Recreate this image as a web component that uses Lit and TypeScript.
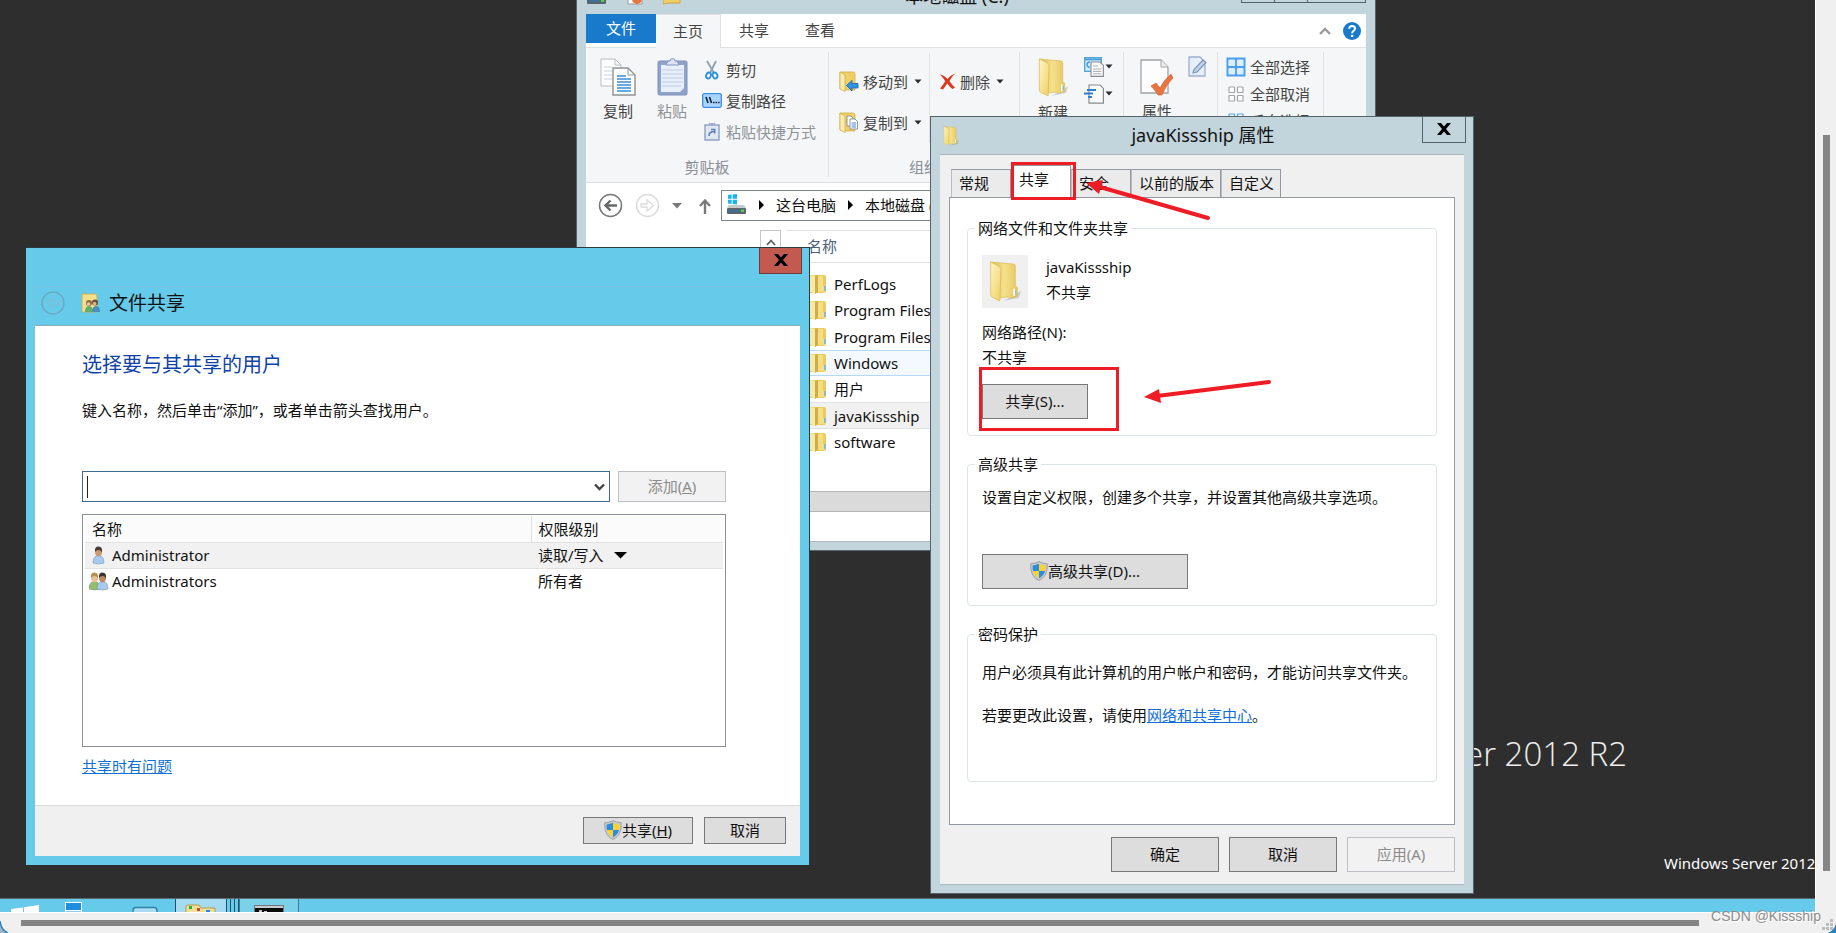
import { LitElement, html, svg, css } from "lit";
import { customElement, property } from "lit/decorators.js";
import { classMap } from "lit/directives/class-map.js";

/* ---------- shared styles ---------- */

const base = css`
  :host {
    display: block;
    font: 15px/20px "Noto Sans", "Noto Sans CJK SC", sans-serif;
    color: #111;
  }
  * {
    box-sizing: border-box;
  }
  button,
  input,
  select {
    font: inherit;
    color: inherit;
    margin: 0;
    padding: 0;
    border: 0;
    border-radius: 0;
    background: none;
    outline: none;
  }
  svg {
    display: block;
    flex: none;
  }
  a {
    color: #0f6fd6;
  }
  .push {
    display: flex;
    align-items: center;
    justify-content: center;
    padding-bottom: 2px;
    border: 1px solid #787878;
    background: #dddddd;
    white-space: nowrap;
  }
  .push:disabled {
    color: #8b8b8b;
    border-color: #bcc0c4;
    background: #f2f2f2;
  }
`;

/* ---------- icons ---------- */

const folder = (w: number, h: number) => html`
  <svg width=${w} height=${h} viewBox="0 0 32 40">
    <defs>
      <linearGradient id="back" x1="0" x2="1">
        <stop offset="0" stop-color="#d9b94e" />
        <stop offset=".5" stop-color="#f5e08c" />
        <stop offset="1" stop-color="#e6c860" />
      </linearGradient>
      <linearGradient id="front" x1="0" x2="1" y2="1">
        <stop offset="0" stop-color="#fff6c4" />
        <stop offset="1" stop-color="#efd066" />
      </linearGradient>
    </defs>
    <path d="M20 36 L32 29 L29 36 L14 39z" fill="#000" opacity=".16" />
    <path d="M2 1 L24 3 Q26 3 26 5 V24 L28 26 V34 L22 36 L19 35 L11 36z" fill="url(#back)" stroke="#d9ba56" stroke-width=".7" />
    <path d="M2 1 L10 5 Q12 6 12 8 L11 39 L3 35 Q2 34 2 32z" fill="url(#front)" stroke="#d9ba56" stroke-width=".7" />
    <path d="M25 27 V34" stroke="#fff" stroke-width="1.6" />
    <path d="M26.5 28 V33" stroke="#7fb9d8" />
  </svg>
`;

const listFolder = html`
  <svg width="21" height="20" viewBox="0 0 21 20">
    <path d="M3 1 H18 Q20 1 20 3 V17 Q20 19 18 19 H3z" fill="#e9cb62" />
    <path d="M12 2 H17 V12 L20 13 V18 L12 18z" fill="#f3de84" />
    <path d="M3 1 L9 2 V20 L3 17z" fill="#f7eaa8" />
    <path d="M9 2 L12 1 V18 L9 20z" fill="#cfae4a" />
    <path d="M19 12 V17" stroke="#69aee0" stroke-width="1.5" />
  </svg>
`;

const shield = html`
  <svg width="18" height="20" viewBox="0 0 18 20">
    <path d="M9 .6 C11.5 2 14.5 2.6 17.2 2.7 C17.6 10.5 15.6 16.4 9 19.4 C2.4 16.4 .4 10.5 .8 2.7 C3.5 2.6 6.5 2 9 .6z" fill="#c9cdd0" stroke="#8b9299" stroke-width=".8" />
    <path d="M9 2.8 V10 H3 C2.6 8 2.6 6 2.7 4.4 C5 4.2 7 3.7 9 2.8z" fill="#2c8ae0" />
    <path d="M9 2.8 C11 3.7 13 4.2 15.3 4.4 C15.4 6 15.4 8 15 10 H9z" fill="#f8d22e" />
    <path d="M3 10 H9 V17.3 C6 15.7 3.8 13.5 3 10z" fill="#f8d22e" />
    <path d="M15 10 H9 V17.3 C12 15.7 14.2 13.5 15 10z" fill="#2c8ae0" />
  </svg>
`;

const person = (x: number, hair: string, skin: string, coat: string) => svg`
  <g transform="translate(${x} 0)">
    <path d="M0 17 Q0 9.5 5.5 9.5 Q11 9.5 11 17 Q5.5 19 0 17z" fill=${coat} stroke="#6f8ba6" stroke-width=".5"/>
    <ellipse cx="5.5" cy="6" rx="3.4" ry="4.4" fill=${skin}/>
    <path d="M2 6 Q1.4 .6 5.6 .6 Q9.8 .6 9 7 Q8.4 4.2 5.6 4 Q3.2 4 2 6z" fill=${hair}/>
  </g>`;

const userIcon = html`
  <svg width="20" height="19" viewBox="0 0 20 19">${person(4, "#4a3a30", "#c99873", "#a7cbee")}</svg>
`;
const usersIcon = html`
  <svg width="20" height="19" viewBox="0 0 20 19">
    ${person(0, "#b98d4a", "#e3c393", "#8fbf68")}${person(8, "#3f3530", "#b98a68", "#a7cbee")}
  </svg>
`;

const caret = html`
  <svg width="8" height="5" viewBox="0 0 8 5"><path d="M.5 .5 H7.5 L4 4.5z" fill="#2b2b2b" /></svg>
`;

const crossIcon = html`
  <svg width="14" height="12" viewBox="0 0 14 12">
    <path d="M0 0 H4 L7 3.6 L10 0 H14 L9 6 L14 12 H10 L7 8.4 L4 12 H0 L5 6z" fill="#000" />
  </svg>
`;

const drive = html`
  <svg width="21" height="21" viewBox="0 0 21 21">
    <path d="M2 1 L5.6 .6 V4.8 H2z M6.6 .4 L11 0 V4.8 H6.6z M2 5.8 H5.6 V10 L2 9.6z M6.6 5.8 H11 V10.6 L6.6 10.1z" fill="#19b5f1" />
    <path d="M3 11 H18 L20 14 H1z" fill="#c3cbd0" />
    <rect x="1" y="14" width="19" height="6" rx="1" fill="#59646c" />
    <rect x="3" y="16" width="11" height="2" fill="#3f6f96" />
    <rect x="15" y="15.5" width="3" height="2.5" fill="#4fd34c" />
  </svg>
`;

const copyBig = html`
  <svg width="36" height="38" viewBox="0 0 36 38">
    <path d="M1 1 H15 L21 7 V28 H1z" fill="#fdfdfd" stroke="#b9bcc0" />
    <path d="M15 1 V7 H21" fill="none" stroke="#b9bcc0" />
    <path d="M4 9 H12 M4 13 H12 M4 17 H12 M4 21 H12" stroke="#c5d3e4" />
    <path d="M13 10 H28 L35 17 V37 H13z" fill="#fff" stroke="#8d9196" stroke-width="1.4" />
    <path d="M28 10 V17 H35" fill="none" stroke="#8d9196" />
    <path d="M17 18 H26 M17 21 H31 M17 24 H31 M17 27 H31 M17 30 H31 M17 33 H31" stroke="#3b8bd8" stroke-width="1.3" />
  </svg>
`;
const pasteBig = html`
  <svg width="31" height="38" viewBox="0 0 31 38">
    <rect x="1" y="3" width="29" height="34" rx="1.5" fill="#8fa2c8" stroke="#7d91ba" />
    <path d="M4 7 H27 V30 L23 34 H4z" fill="#e8eefa" />
    <path d="M5 12 H26 M5 16 H26 M5 20 H26 M5 24 H26 M5 28 H24" stroke="#c1cde4" />
    <path d="M9 7 L11 3 H13 A2.5 2.5 0 0 1 18 3 H20 L22 7z" fill="#dbe3f2" stroke="#8496bb" />
  </svg>
`;
const scissors = html`
  <svg width="20" height="20" viewBox="0 0 20 20">
    <path d="M5 1 L12 13 M14 1 L8 13" stroke="#8aa0b4" stroke-width="1.8" />
    <ellipse cx="6.5" cy="15.5" rx="2.3" ry="3" fill="none" stroke="#2b90d9" stroke-width="1.9" transform="rotate(20 6.5 15.5)" />
    <ellipse cx="13" cy="15.5" rx="2.3" ry="3" fill="none" stroke="#2b90d9" stroke-width="1.9" transform="rotate(-20 13 15.5)" />
  </svg>
`;
const pathIcon = html`
  <svg width="20" height="15" viewBox="0 0 20 15">
    <rect x=".7" y=".7" width="18.6" height="13.6" rx="1.5" fill="#a9d4ff" stroke="#3a8fe0" stroke-width="1.3" />
    <path d="M4 4 L6 10 M7.5 4 L9.5 10" stroke="#123" stroke-width="1.6" />
    <path d="M11 9.5 H12.6 M13.6 9.5 H15.2 M16.2 9.5 H17.6" stroke="#123" stroke-width="1.5" />
  </svg>
`;
const shortcutIcon = html`
  <svg width="20" height="18" viewBox="0 0 20 18">
    <rect x="3" y="2" width="14" height="15" fill="#dfe7f4" stroke="#8d9fc0" stroke-width="1.4" />
    <rect x="7" y="0" width="6" height="3" fill="#9fb0cf" />
    <path d="M7 13 Q7 8.5 12 8.5 M9 6.5 H12.7 V10.5" fill="none" stroke="#5b7cb0" stroke-width="1.5" />
  </svg>
`;
const moveIcon = html`
  <svg width="20" height="21" viewBox="0 0 20 21">
    <path d="M1 1 H14 Q16 1 16 3 V19 H5 L1 18z" fill="#efcf68" stroke="#d0aa3f" stroke-width=".7" />
    <path d="M1 1 L6 4 V20.5 L1 18z" fill="#fbedb0" stroke="#d0aa3f" stroke-width=".7" />
    <path d="M7.5 14.5 L13 9.5 V12.5 H19 V17 H13 V20z" fill="#3094e4" stroke="#1766ac" stroke-width=".8" />
  </svg>
`;
const copyToIcon = html`
  <svg width="20" height="21" viewBox="0 0 20 21">
    <path d="M1 1 H14 Q16 1 16 3 V19 H5 L1 18z" fill="#efcf68" stroke="#d0aa3f" stroke-width=".7" />
    <path d="M1 1 L6 4 V20.5 L1 18z" fill="#fbedb0" stroke="#d0aa3f" stroke-width=".7" />
    <path d="M8 4 H12 L14 6 V14 H8z" fill="#fff" stroke="#868c92" stroke-width=".9" />
    <path d="M11 7 H16 L18.5 9.5 V17 H11z" fill="#fff" stroke="#868c92" stroke-width=".9" />
    <path d="M12.6 11 H17 M12.6 13 H17 M12.6 15 H17" stroke="#3b8bd8" />
  </svg>
`;
const deleteIcon = html`
  <svg width="17" height="17" viewBox="0 0 17 17">
    <path d="M1 1.5 Q5 2 8.5 6 Q12 2 16 .5 Q12.5 4 10.5 8 Q13 12 16 14.5 L13.5 16 Q10.5 14 8.3 10.6 Q6 14 4 16.5 L1 15.5 Q4 12 6.2 8.2 Q4 4.5 1 1.5z" fill="#d8391f" />
  </svg>
`;
const renameIcon = html`
  <svg width="17" height="12" viewBox="0 0 17 12"><rect x=".5" y=".5" width="16" height="11" fill="#cfe4fa" stroke="#3a8fe0" /></svg>
`;
const newItem = html`
  <svg width="20" height="20" viewBox="0 0 20 20">
    <rect x=".7" y=".7" width="16.6" height="13.6" fill="#d7ecfb" stroke="#4ba0d8" stroke-width="1.3" />
    <path d="M1 2.4 H17" stroke="#4ba0d8" stroke-width="2" />
    <path d="M6 5 Q3 5 3 7.5 T6 10.5" fill="none" stroke="#4ba0d8" stroke-width="1.5" />
    <path d="M7 5 H16 L19.4 8.4 V19.4 H7z" fill="#fbfbfb" stroke="#878c91" stroke-width="1.1" />
    <path d="M9 9 H14 M9 12 H17.4 M9 14.4 H17.4 M9 16.8 H17.4" stroke="#a9adb2" />
  </svg>
`;
const easyAccess = html`
  <svg width="20" height="20" viewBox="0 0 20 20">
    <path d="M5 1 H16 L19.4 4.4 V19.2 H5z" fill="#fbfbfb" stroke="#878c91" stroke-width="1.2" />
    <path d="M3 6 H12 M0 9.6 H9 M4 13 H8" stroke="#2f7fd0" stroke-width="2" />
  </svg>
`;
const propsBig = html`
  <svg width="34" height="38" viewBox="0 0 34 38">
    <path d="M1 2 H21 L28 9 V35 H1z" fill="#fdfdfd" stroke="#a0a4a8" stroke-width="1.3" />
    <path d="M21 2 V9 H28" fill="#eee" stroke="#a0a4a8" />
    <path d="M11 28 L16 25 L20 30 Q24 22 31 16 L33 20 Q26 27 22 37 L18 37 Q15 32 11 28z" fill="#ea7440" stroke="#cf5a28" stroke-width=".6" />
  </svg>
`;
const editIcon = html`
  <svg width="19" height="21" viewBox="0 0 19 21">
    <path d="M1 1 H12 L17 6 V20 H1z" fill="#e6eef9" stroke="#9fb0cb" stroke-width="1.3" />
    <path d="M5 17 L6 13.5 L15 4 L18 6.5 L9 16z" fill="#c1d1ea" stroke="#7b92b8" stroke-width="1.1" />
  </svg>
`;
const tiles = (fill: string, stroke: string, sheet: string) => html`
  <svg width="20" height="20" viewBox="0 0 20 20">
    <rect x=".5" y=".5" width="19" height="19" fill=${sheet} />
    ${[3, 11.5].map((x) =>
      [3, 11.5].map(
        (y) => svg`<rect x=${x} y=${y} width="5.5" height="5.5" rx=".6" fill=${fill} stroke=${stroke} stroke-width="1.2"/>`
      )
    )}
  </svg>
`;

/* ---------- explorer window ---------- */

@customElement("explorer-window")
export class ExplorerWindow extends LitElement {
  static styles = [
    base,
    css`
      :host {
        background: #c3d5dc;
        border: 1px solid #56636a;
        padding: 0 9px 8px;
      }
      .titlebar {
        display: flex;
        height: 37px;
        justify-content: space-between;
      }
      .quick {
        display: flex;
        align-items: flex-end;
        gap: 20px;
        height: 28px;
      }
      .title {
        padding: 9px 8px 0 0;
        font-size: 18px;
      }
      .sysbuttons {
        display: flex;
        height: 26px;
        border: 1px solid #56636a;
      }
      .sysbuttons button {
        width: 33px;
        border-right: 1px solid #56636a;
      }
      .sysbuttons button:last-child {
        width: 57px;
        border-right: 0;
      }
      .tabs {
        display: flex;
        height: 34px;
        background: #fff;
        border-bottom: 1px solid #dfe0e1;
      }
      .tab {
        display: block;
        width: 66px;
        padding-bottom: 2px;
        color: #444;
      }
      .tab.file {
        width: 70px;
        height: 29px;
        background: #1979ca;
        color: #fff;
      }
      .tab.home {
        width: 65px;
        height: 34px;
        background: #f5f6f7;
        border: solid #dfe0e1;
        border-width: 1px 1px 0 0;
      }
      .tools {
        display: flex;
        align-items: center;
        gap: 12px;
        margin-left: auto;
        padding-right: 5px;
      }
      .ribbon {
        display: flex;
        height: 135px;
        background: #f5f6f7;
        border-bottom: 1px solid #dcdddf;
        color: #444;
      }
      .group {
        display: flex;
        flex-direction: column;
        flex: none;
        margin: 4px 0 5px;
        padding-top: 1px;
        border-right: 1px solid #e1e2e4;
      }
      .group .row {
        display: flex;
        padding-left: 5px;
      }
      .caption {
        margin-top: auto;
        text-align: center;
        color: #8a9097;
      }
      .clip {
        width: 243px;
      }
      .organize {
        width: 191px;
      }
      .create {
        width: 104px;
      }
      .open {
        width: 94px;
      }
      .select {
        width: 106px;
      }
      .big {
        display: flex;
        flex-direction: column;
        align-items: center;
        justify-content: flex-start;
        flex: none;
        gap: 5px;
        width: 54px;
        padding-top: 5px;
      }
      .wide {
        width: 56px;
      }
      .col {
        display: flex;
        flex-direction: column;
        flex: none;
        padding: 1px 0 0 3px;
      }
      .small {
        display: flex;
        align-items: center;
        gap: 4px;
        height: 31px;
        white-space: nowrap;
      }
      .spaced {
        padding: 8px 0 0 5px;
        width: 95px;
      }
      .spaced .small {
        height: 41px;
      }
      .spaced svg:last-child {
        margin-left: 2px;
      }
      .divided {
        width: 90px;
        border-left: 1px solid #e1e2e4;
        padding-left: 9px;
      }
      .tight {
        padding-top: 0;
      }
      .tight .small {
        height: 27px;
      }
      .create .small {
        gap: 1px;
      }
      .dim {
        color: #8e9298;
      }
      .address {
        display: flex;
        align-items: center;
        gap: 12px;
        height: 47px;
        padding: 0 0 2px 12px;
        background: #fff;
      }
      .recent {
        width: 14px;
      }
      .crumbs {
        display: flex;
        align-items: center;
        flex: 1;
        height: 31px;
        gap: 12px;
        margin: 0 10px 0 -3px;
        padding: 0 0 2px 4px;
        border: 1px solid #7f868b;
        white-space: nowrap;
      }
      .panes {
        display: flex;
        background: #fff;
      }
      .nav {
        display: flex;
        justify-content: flex-end;
        width: 195px;
      }
      .up {
        display: flex;
        justify-content: center;
        width: 21px;
        height: 30px;
        padding-top: 8px;
        border: 1px solid #c6c6c6;
      }
      .files {
        flex: 1;
        padding-left: 5px;
      }
      .colhead {
        height: 33px;
        padding: 5px 21px;
        border: solid #e2e2e2;
        border-width: 1px 0;
        color: #4c607a;
      }
      .items {
        display: grid;
        grid-auto-rows: 1fr;
        height: 184px;
        margin: 8px 0 36px;
        padding: 0;
        list-style: none;
      }
      .item {
        display: flex;
        align-items: center;
        gap: 7px;
        padding-left: 19px;
        border: 1px solid transparent;
      }
      .item.hover {
        background: #f4f9ff;
        border-color: #b5d7f8;
      }
      .item.picked {
        background: #f1f1f1;
        border-color: #e2e2e2;
      }
      .hscroll {
        height: 21px;
        background: #dadada;
        border: solid #b4b4b4;
        border-width: 1px 0;
      }
      .status {
        height: 30px;
        background: #fff;
        border-bottom: 1px solid #a9b9c0;
      }
    `,
  ];

  private files = ["PerfLogs", "Program Files", "Program Files (x86)", "Windows", "用户", "javaKissship", "software"];

  private small(icon: unknown, text: string, arrow = false, dim = false) {
    return html`<button class=${classMap({ small: true, dim })}>${icon}${text ? html`<span>${text}</span>` : ""}${arrow ? caret : ""}</button>`;
  }

  render() {
    return html`
      <div class="titlebar">
        <div class="quick">
          ${drive}
          <svg width="16" height="18" viewBox="0 0 16 18">
            <path d="M1 0 H15 V17 H1z" fill="#fff" stroke="#999" />
            <circle cx="10" cy="12" r="5" fill="#ea7440" />
          </svg>
          <svg width="18" height="18" viewBox="0 0 18 18"><path d="M0 0 H17 V16 H6 L0 17z" fill="#efcf68" stroke="#c9a23a" /></svg>
        </div>
        <div class="title">本地磁盘 (C:)</div>
        <div class="sysbuttons">
          <button aria-label="最小化"></button><button aria-label="最大化"></button><button aria-label="关闭"></button>
        </div>
      </div>
      <div class="tabs">
        <button class="tab file">文件</button>
        <button class="tab home">主页</button>
        <button class="tab">共享</button>
        <button class="tab">查看</button>
        <div class="tools">
          <svg width="12" height="8" viewBox="0 0 12 8"><path d="M1 7 L6 2 L11 7" fill="none" stroke="#9a9a9a" stroke-width="2.4" /></svg>
          <svg width="18" height="18" viewBox="0 0 18 18">
            <circle cx="9" cy="9" r="9" fill="#1979ca" />
            <path d="M6.2 6.8 Q6.3 4 9.1 4 Q12 4 12 6.5 Q12 8 10.4 9 Q9.2 9.8 9.2 11.2" fill="none" stroke="#fff" stroke-width="2" />
            <rect x="8.1" y="12.8" width="2.2" height="2.2" fill="#fff" />
          </svg>
        </div>
      </div>
      <div class="ribbon">
        <div class="group clip">
          <div class="row">
            <button class="big">${copyBig}复制</button>
            <button class="big dim">${pasteBig}粘贴</button>
            <div class="col">
              ${this.small(scissors, "剪切")} ${this.small(pathIcon, "复制路径")}
              ${this.small(shortcutIcon, "粘贴快捷方式", false, true)}
            </div>
          </div>
          <div class="caption">剪贴板</div>
        </div>
        <div class="group organize">
          <div class="row">
            <div class="col spaced">${this.small(moveIcon, "移动到", true)} ${this.small(copyToIcon, "复制到", true)}</div>
            <div class="col spaced divided">${this.small(deleteIcon, "删除", true)} ${this.small(renameIcon, "重命名")}</div>
          </div>
          <div class="caption">组织</div>
        </div>
        <div class="group create">
          <div class="row">
            <button class="big wide">${folder(34, 39)}新建</button>
            <div class="col tight">${this.small(newItem, "", true)} ${this.small(easyAccess, "", true)}</div>
          </div>
        </div>
        <div class="group open">
          <div class="row">
            <button class="big wide">${propsBig}属性</button>
            <div class="col tight">${this.small(editIcon, "")}</div>
          </div>
        </div>
        <div class="group select">
          <div class="row">
            <div class="col tight">
              ${this.small(tiles("#dceeff", "#dceeff", "#4a9ff0"), "全部选择")}
              ${this.small(tiles("#fff", "#a5a5a5", "none"), "全部取消")}
              ${this.small(tiles("#fff", "#4a9ff0", "none"), "反向选择")}
            </div>
          </div>
        </div>
      </div>
      <div class="address">
        <button aria-label="后退">
          <svg width="25" height="25" viewBox="0 0 25 25">
            <circle cx="12.5" cy="12.5" r="11" fill="none" stroke="#77797b" stroke-width="1.5" />
            <path d="M19 12.5 H8 M12.5 7.5 L7.5 12.5 L12.5 17.5" fill="none" stroke="#66686a" stroke-width="2.4" />
          </svg>
        </button>
        <button aria-label="前进">
          <svg width="25" height="25" viewBox="0 0 25 25">
            <circle cx="12.5" cy="12.5" r="11" fill="none" stroke="#dcdcdc" stroke-width="1.5" />
            <path d="M6 11 H12 V7 L18.5 12.5 L12 18 V14 H6z" fill="none" stroke="#dcdcdc" stroke-width="1.3" />
          </svg>
        </button>
        <button class="recent" aria-label="最近浏览的位置">
          <svg width="10" height="6" viewBox="0 0 10 6"><path d="M0 0 H10 L5 5.5z" fill="#77797b" /></svg>
        </button>
        <button aria-label="上移">
          <svg width="14" height="16" viewBox="0 0 14 16"><path d="M7 16 V3 M2 8 L7 2.5 L12 8" fill="none" stroke="#77797b" stroke-width="2.4" /></svg>
        </button>
        <div class="crumbs">
          ${drive}
          <svg width="5" height="10" viewBox="0 0 5 10"><path d="M0 0 L5 5 L0 10z" /></svg>
          这台电脑
          <svg width="5" height="10" viewBox="0 0 5 10"><path d="M0 0 L5 5 L0 10z" /></svg>
          本地磁盘 (C:)
        </div>
      </div>
      <div class="panes">
        <div class="nav">
          <button class="up" aria-label="向上滚动">
            <svg width="10" height="7" viewBox="0 0 10 7"><path d="M1 6 L5 1.5 L9 6" fill="none" stroke="#606060" stroke-width="1.8" /></svg>
          </button>
        </div>
        <div class="files">
          <div class="colhead">名称</div>
          <ul class="items">
            ${this.files.map(
              (f) => html`<li class=${classMap({ item: true, hover: f === "Windows", picked: f === "javaKissship" })}>${listFolder}${f}</li>`
            )}
          </ul>
          <div class="hscroll"></div>
        </div>
      </div>
      <div class="status"></div>
    `;
  }
}

/* ---------- folder properties dialog ---------- */

@customElement("properties-dialog")
export class PropertiesDialog extends LitElement {
  @property() name = "javaKissship";

  static styles = [
    base,
    css`
      :host {
        background: #c3d5dc;
        border: 1px solid #56636a;
        padding: 0 9px 8px;
      }
      .titlebar {
        display: grid;
        grid-template-columns: 44px 1fr 44px;
        height: 37px;
        margin-right: -2px;
      }
      .titlebar svg {
        margin: 9px 0 0 2px;
      }
      .title {
        padding-top: 6px;
        font-size: 18px;
        line-height: 24px;
        text-align: center;
      }
      .close {
        display: flex;
        justify-content: center;
        height: 26px;
        border: solid #56636a;
        border-width: 0 1px 1px;
      }
      .titlebar .close svg {
        margin: 6px 0 0;
      }
      .content {
        padding: 10px 9px 12px;
        background: #f0f0f0;
        border: solid #a9b9c0;
        border-width: 1px 0;
      }
      .tabs {
        display: flex;
        align-items: flex-end;
        height: 32px;
        padding-left: 2px;
      }
      .tab {
        width: 60px;
        height: 28px;
        padding: 0 0 2px 7px;
        border: 1px solid #9498a2;
        border-bottom: 0;
        border-left-color: #b9bcc4;
        background: #ebebeb;
        text-align: left;
      }
      .tab.current {
        height: 32px;
        padding-bottom: 6px;
        background: #fff;
      }
      .tab.long {
        width: 90px;
      }
      .panel {
        display: grid;
        gap: 18px;
        padding: 20px 17px 42px;
        border: 1px solid #9498a2;
        background: #fff;
      }
      fieldset {
        min-width: 0;
        margin: 0;
        padding: 0 7px;
        border: 1px solid #dce4ea;
        border-radius: 4px;
      }
      legend {
        padding: 0 3px;
      }
      .sharing {
        padding: 17px 7px 16px;
      }
      .advanced {
        padding: 13px 7px 16px;
      }
      .security {
        padding: 18px 7px 56px;
      }
      .target {
        display: flex;
        gap: 18px;
      }
      .thumb {
        padding: 6px 4px;
        background: #f0f0f0;
      }
      .lines {
        line-height: 25px;
      }
      .path {
        margin: 12px 0 14px;
        line-height: 25px;
      }
      p {
        margin: 0;
        white-space: nowrap;
      }
      .security p + p {
        margin-top: 23px;
      }
      .sharing .push,
      .advanced .push {
        width: 106px;
        height: 35px;
      }
      .advanced .push {
        width: 206px;
        margin-top: 47px;
      }
      .footer {
        display: flex;
        justify-content: flex-end;
        gap: 10px;
        margin-top: 12px;
      }
      .footer .push {
        width: 108px;
        height: 35px;
      }
    `,
  ];

  render() {
    return html`
      <div class="titlebar">
        ${folder(18, 20)}
        <div class="title">${this.name} 属性</div>
        <button class="close" aria-label="关闭">${crossIcon}</button>
      </div>
      <div class="content">
        <div class="tabs">
          <button class="tab">常规</button>
          <button class="tab current">共享</button>
          <button class="tab">安全</button>
          <button class="tab long">以前的版本</button>
          <button class="tab">自定义</button>
        </div>
        <div class="panel">
          <fieldset>
            <legend>网络文件和文件夹共享</legend>
            <div class="sharing">
              <div class="target">
                <div class="thumb">${folder(38, 41)}</div>
                <div class="lines">${this.name}<br />不共享</div>
              </div>
              <div class="path">网络路径(N):<br />不共享</div>
              <button class="push">共享(S)...</button>
            </div>
          </fieldset>
          <fieldset>
            <legend>高级共享</legend>
            <div class="advanced">
              <p>设置自定义权限，创建多个共享，并设置其他高级共享选项。</p>
              <button class="push">${shield}高级共享(D)...</button>
            </div>
          </fieldset>
          <fieldset>
            <legend>密码保护</legend>
            <div class="security">
              <p>用户必须具有此计算机的用户帐户和密码，才能访问共享文件夹。</p>
              <p>若要更改此设置，请使用<a href="#network">网络和共享中心</a>。</p>
            </div>
          </fieldset>
        </div>
        <div class="footer">
          <button class="push">确定</button>
          <button class="push">取消</button>
          <button class="push" disabled>应用(A)</button>
        </div>
      </div>
    `;
  }
}

/* ---------- file sharing wizard ---------- */

@customElement("share-dialog")
export class ShareDialog extends LitElement {
  static styles = [
    base,
    css`
      :host {
        background: #66caea;
        border: solid #2b3a41;
        border-width: 1px 1px 0 0;
        padding: 0 9px 9px;
      }
      .titlebar {
        display: flex;
        justify-content: flex-end;
        height: 38px;
        margin-right: -2px;
      }
      .close {
        display: flex;
        justify-content: center;
        width: 43px;
        height: 26px;
        padding-top: 6px;
        background: #c35a50;
        border: solid #6d3a3d;
        border-width: 0 1px 1px;
      }
      .band {
        display: flex;
        align-items: center;
        height: 39px;
        padding: 0 0 6px 5px;
        border: solid #7cc4dc;
        border-width: 1px 0 0 1px;
        font-size: 19px;
      }
      .band svg + svg {
        margin: 0 9px 0 16px;
      }
      .body {
        padding: 25px 74px 29px 47px;
        background: #fff;
        border-top: 1px solid #8fa9b5;
      }
      h1 {
        margin: 0;
        font-size: 20px;
        line-height: 28px;
        font-weight: 400;
        color: #1043a8;
      }
      p {
        margin: 21px 0 51px;
      }
      .entry {
        display: flex;
        gap: 8px;
      }
      .combo {
        display: flex;
        align-items: center;
        flex: 1;
        height: 31px;
        border: 1px solid #3e6a92;
      }
      .combo::before {
        content: "";
        width: 1px;
        height: 22px;
        margin-left: 4px;
        background: #222;
      }
      .combo input {
        flex: 1;
        align-self: stretch;
      }
      .combo button {
        display: flex;
        justify-content: center;
        width: 20px;
      }
      .add {
        width: 108px;
        height: 31px;
      }
      .list {
        height: 233px;
        margin: 12px 0 9px;
        padding: 1px 2px;
        border: 1px solid #8b8f9b;
      }
      table {
        width: 100%;
        border-collapse: collapse;
        table-layout: fixed;
      }
      tr {
        height: 26px;
        border-bottom: 1px solid #e2e2e2;
      }
      tbody tr:last-child {
        border-bottom: 0;
      }
      tr.current {
        background: #f1f1f1;
      }
      th,
      td {
        padding: 0 0 0 7px;
        font-weight: 400;
        text-align: left;
      }
      th {
        background: #fbfbfb;
      }
      th + th {
        width: 192px;
        border-left: 1px solid #e0e0e0;
      }
      td:first-child {
        padding-left: 4px;
      }
      .who,
      .level {
        display: flex;
        align-items: center;
        gap: 3px;
      }
      .level {
        gap: 10px;
      }
      .level select {
        appearance: none;
      }
      .footer {
        display: flex;
        justify-content: flex-end;
        gap: 11px;
        padding: 11px 14px 12px;
        background: #f0f0f0;
        border: solid #dadada;
        border-width: 1px 0 0;
      }
      .footer .push {
        width: 82px;
        height: 27px;
      }
      .footer .share {
        width: 110px;
      }
    `,
  ];

  render() {
    return html`
      <div class="titlebar"><button class="close" aria-label="关闭">${crossIcon}</button></div>
      <div class="band">
        <svg width="24" height="24" viewBox="0 0 24 24">
          <circle cx="12" cy="12" r="11" fill="none" stroke="#6ba9c0" stroke-width="1.4" />
          <path d="M18 10.5 H12 V7 L6 12 L12 17 V13.5 H18z" fill="none" stroke="#83bdd2" stroke-width="1.2" />
        </svg>
        <svg width="19" height="20" viewBox="0 0 19 20">
          <path d="M1 1 H14 Q16 1 16 3 V19 H1z" fill="#f3e08d" stroke="#caa94c" stroke-width=".8" />
          <path d="M4 19 Q4 13 8 13 Q12 13 12 19z" fill="#5fae6b" />
          <path d="M11 19 Q11 13 15 13 Q19 13 19 19z" fill="#4d8fb8" />
          <circle cx="8" cy="10" r="3" fill="#8a6a4a" />
          <circle cx="14" cy="9.5" r="3" fill="#6b4a3a" />
          <circle cx="7.6" cy="11" r="1.8" fill="#e6c8a0" />
          <circle cx="13.6" cy="10.6" r="1.8" fill="#d9b088" />
        </svg>
        文件共享
      </div>
      <div class="body">
        <h1>选择要与其共享的用户</h1>
        <p>键入名称，然后单击“添加”，或者单击箭头查找用户。</p>
        <div class="entry">
          <div class="combo">
            <input type="text" aria-label="用户名称" />
            <button aria-label="展开">
              <svg width="11" height="8" viewBox="0 0 11 8"><path d="M1 1.5 L5.5 6 L10 1.5" fill="none" stroke="#444" stroke-width="2.4" /></svg>
            </button>
          </div>
          <button class="push add" disabled><span>添加(<u>A</u>)</span></button>
        </div>
        <div class="list">
          <table>
            <thead>
              <tr><th>名称</th><th>权限级别</th></tr>
            </thead>
            <tbody>
              <tr class="current">
                <td><span class="who">${userIcon}Administrator</span></td>
                <td>
                  <label class="level">
                    <select aria-label="权限级别"><option>读取/写入</option></select>
                    <svg width="13" height="7" viewBox="0 0 13 7"><path d="M0 0 H13 L6.5 6.5z" /></svg>
                  </label>
                </td>
              </tr>
              <tr>
                <td><span class="who">${usersIcon}Administrators</span></td>
                <td>所有者</td>
              </tr>
            </tbody>
          </table>
        </div>
        <a href="#help">共享时有问题</a>
      </div>
      <div class="footer">
        <button class="push share">${shield}<span>共享(<u>H</u>)</span></button>
        <button class="push">取消</button>
      </div>
    `;
  }
}

/* ---------- desktop with scroll bars ---------- */

@customElement("app-root")
export class AppRoot extends LitElement {
  static styles = [
    base,
    css`
      :host {
        position: relative;
        display: grid;
        grid-template: 1fr 20px / 1fr 20px;
        height: 100vh;
        overflow: hidden;
        background: #f0f0f0;
      }
      .desktop {
        position: relative;
        display: flex;
        flex-direction: column;
        justify-content: flex-end;
        overflow: hidden;
        background: #2e2e2e;
        border: solid #fff;
        border-width: 0 1px 1px 0;
      }
      explorer-window {
        position: absolute;
        left: 576px;
        top: -24px;
        width: 800px;
      }
      share-dialog {
        position: absolute;
        left: 26px;
        top: 247px;
        width: 784px;
      }
      properties-dialog {
        position: absolute;
        left: 930px;
        top: 116px;
        width: 544px;
      }
      .brand {
        position: absolute;
        right: 188px;
        top: 730px;
        font: 300 33px/48px "Open Sans", "Noto Sans", sans-serif;
        color: #eee;
        white-space: nowrap;
      }
      .edition {
        position: absolute;
        left: 1664px;
        top: 853px;
        color: #fff;
        white-space: nowrap;
      }
      .marks {
        position: absolute;
        left: 0;
        top: 0;
        pointer-events: none;
      }
      .taskbar {
        display: flex;
        height: 14px;
        overflow: hidden;
        background: #66caea;
        border-top: 1px solid #5c6a70;
      }
      .task {
        display: flex;
        align-items: flex-start;
        justify-content: center;
        width: 50px;
        height: 40px;
      }
      .task.narrow {
        width: 46px;
      }
      .task.mid {
        width: 79px;
        padding-left: 18px;
      }
      .task.active {
        width: 52px;
        background: #a5daf2;
        border: solid #1f5468;
        border-width: 0 1px;
      }
      .stack {
        width: 4px;
        height: 40px;
        border-right: 1px solid #1f5468;
      }
      .task.open {
        width: 60px;
        background: #7bd0ea;
        border: solid #3b7c92;
        border-width: 0 1px;
      }
      .vtrack {
        padding: 135px 6px 42px 7px;
      }
      .htrack {
        padding: 7px 117px 7px 21px;
      }
      .thumb {
        width: 100%;
        height: 100%;
        background: #858585;
      }
      .corner {
        display: flex;
        align-items: flex-end;
        justify-content: flex-end;
      }
      .watermark {
        position: absolute;
        right: 15px;
        bottom: 7px;
        font: 14px/20px "Liberation Sans", sans-serif;
        color: #8d8d8d;
        text-shadow: 1px 1px 0 #fff;
      }
      .curve {
        position: absolute;
        left: 0;
        bottom: 0;
      }
    `,
  ];

  render() {
    return html`
      <div class="desktop">
        <div class="brand">Windows Server 2012 R2</div>
        <div class="edition">Windows Server 2012 R2</div>
        <nav class="taskbar">
          <button class="task" aria-label="开始">
            <svg width="28" height="24" viewBox="0 0 28 24"><path d="M0 10 L12 8.4 V24 H0z M13 8.2 L28 6 V24 H13z" fill="#fff" /></svg>
          </button>
          <button class="task narrow" aria-label="服务器管理器">
            <svg width="17" height="24" viewBox="0 0 17 24">
              <rect y="3" width="17" height="20" fill="#fff" />
              <path d="M1 4 H16 V11 H1z M1 12.5 H16 V22 H1z" fill="#1e8fdf" />
            </svg>
          </button>
          <button class="task mid" aria-label="PowerShell">
            <svg width="26" height="24" viewBox="0 0 26 24"><rect x="1" y="8.5" width="24" height="16" rx="3" fill="#a9dcf2" stroke="#2f7fa8" stroke-width="1.4" /></svg>
          </button>
          <button class="task active" aria-label="文件资源管理器">
            <svg width="32" height="24" viewBox="0 0 32 24">
              <path d="M1 8 Q1 6 3 6 H14 L16 9 H30 V24 H1z" fill="#f3df9a" stroke="#b99a45" />
              <path d="M4 7 H7 V10 H4z" fill="#2db52d" /><path d="M12 9 H15 V12 H12z" fill="#d8472a" /><path d="M21 11 H25 V14 H21z" fill="#1e8fdf" />
            </svg>
          </button>
          <span class="stack"></span><span class="stack"></span><span class="stack"></span>
          <button class="task open" aria-label="命令提示符">
            <svg width="30" height="24" viewBox="0 0 30 24">
              <rect x=".5" y="6.5" width="29" height="18" fill="#0b0b0b" stroke="#70757a" />
              <path d="M1 8 H29" stroke="#c9cdd0" stroke-width="2" />
              <path d="M5 12 H8 M10 13 H13" stroke="#fff" stroke-width="1.5" />
            </svg>
          </button>
        </nav>
        <explorer-window></explorer-window>
        <share-dialog></share-dialog>
        <properties-dialog></properties-dialog>
        <svg class="marks" width="1815" height="912" viewBox="0 0 1815 912">
          <g fill="none" stroke="#ee1c25" stroke-width="3">
            <rect x="1012.5" y="163.5" width="62" height="35" />
            <rect x="980.5" y="368.5" width="137" height="61" />
          </g>
          <g stroke="#ee1c25" stroke-width="4" stroke-linecap="round">
            <path d="M1208 218 L1100 187" />
            <path d="M1269 382 L1157 396" />
          </g>
          <path d="M1086 183 L1103 180 L1099 194z M1144 397 L1159 389 L1161 403z" fill="#ee1c25" />
        </svg>
      </div>
      <div class="vtrack"><div class="thumb"></div></div>
      <div class="htrack"><div class="thumb"></div></div>
      <div class="corner">
        <svg width="14" height="14" viewBox="0 0 14 14">
          <path d="M8 0h3v3h-3z M4 4h3v3h-3z M8 4h3v3h-3z M0 8h3v3h-3z M4 8h3v3h-3z M8 8h3v3h-3z" fill="#bdbdbd" />
          <path d="M14 4 Q13 11 6 14 H14z" fill="#2a7fc0" />
        </svg>
      </div>
      <svg class="curve" width="8" height="12" viewBox="0 0 8 12"><path d="M0 0 Q1 9 8 12 H0z" fill="#9fb6c6" /><path d="M0 0 Q1 9 8 12" fill="none" stroke="#2a7fc0" stroke-width="1.4" /></svg>
      <div class="watermark">CSDN @Kissship</div>
    `;
  }
}
